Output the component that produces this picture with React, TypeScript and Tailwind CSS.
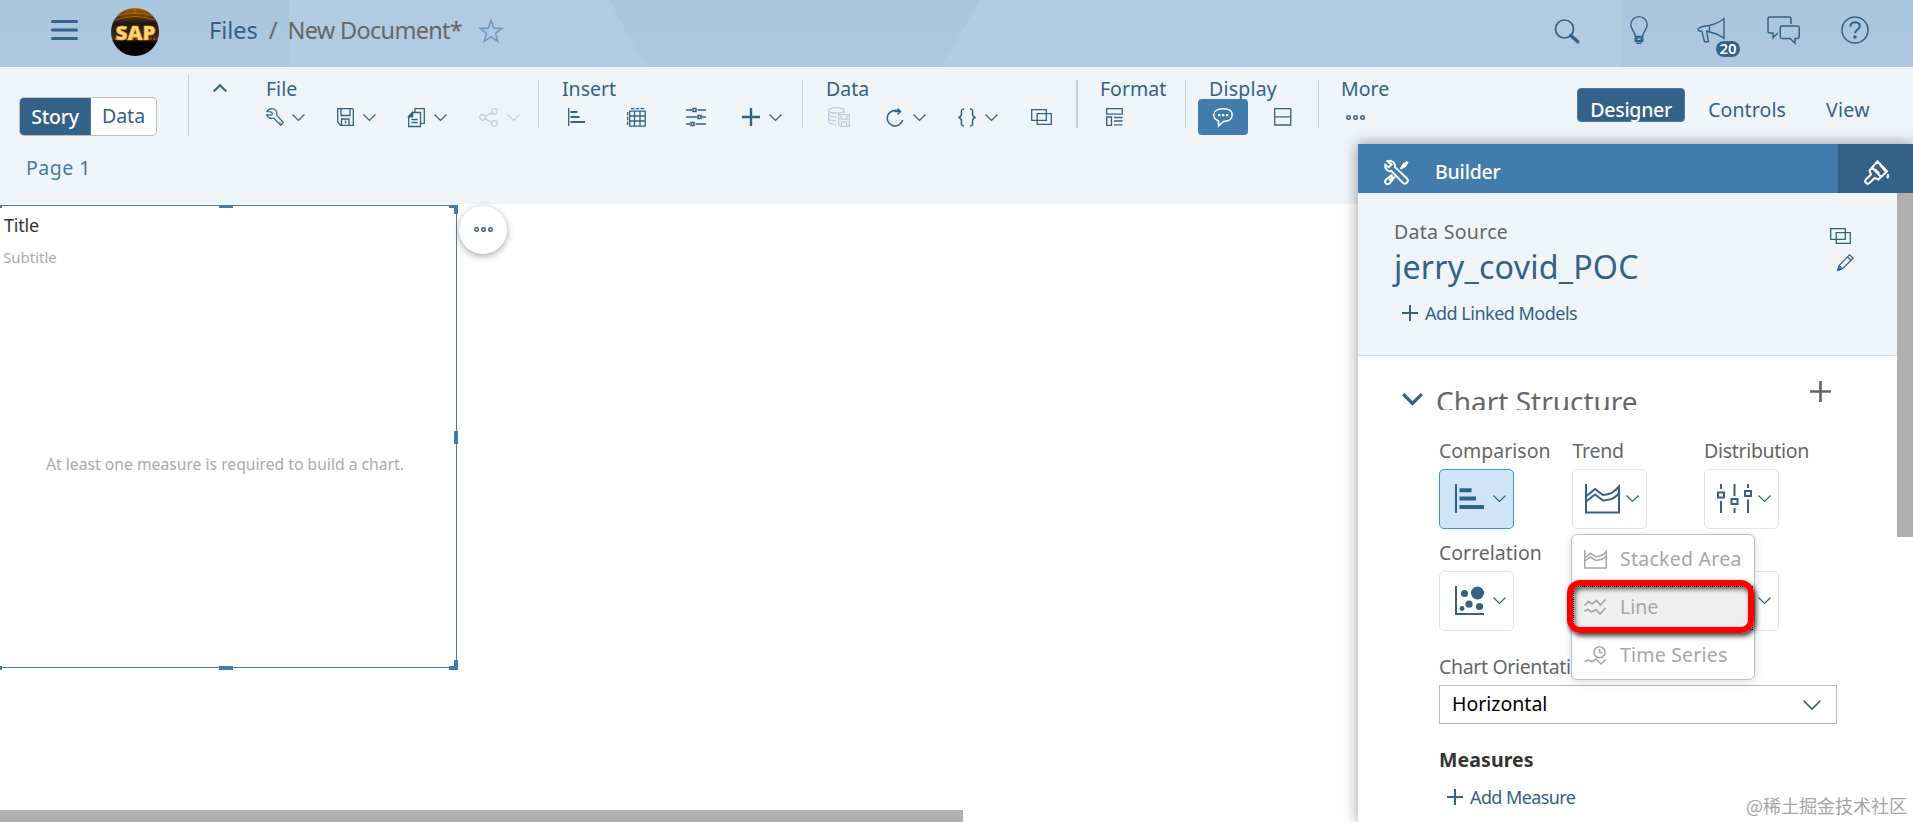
import type { ReactNode } from "react";

type IconProps = {
    w: number;
    h: number;
    sw?: number;
    className?: string;
    children: ReactNode;
};

function Icon({ w, h, sw = 1.3, className = "", children }: IconProps) {
    return (
        <svg
            width={w}
            height={h}
            viewBox={`0 0 ${w} ${h}`}
            fill="none"
            stroke="currentColor"
            strokeWidth={sw}
            className={`shrink-0 overflow-visible ${className}`}
        >
            {children}
        </svg>
    );
}

const Chevron = ({ className = "" }: { className?: string }) => (
    <Icon w={13} h={7} sw={1.2} className={className}>
        <path d="M.5.5l6 6 6-6" />
    </Icon>
);

const Dots = () => (
    <Icon w={19} h={5} sw={1.4}>
        <circle cx="2.5" cy="2.5" r="1.8" />
        <circle cx="9.5" cy="2.5" r="1.8" />
        <circle cx="16.5" cy="2.5" r="1.8" />
    </Icon>
);

const Overlap = () => (
    <Icon w={21} h={16}>
        <path d="M.7.7h14.6v10.6H.7zM6.2 4.7h14.1v10.6H6.2z" />
    </Icon>
);

const Plus = ({ s, sw }: { s: number; sw: number }) => (
    <svg width={s} height={s} viewBox="0 0 18 18" stroke="currentColor" strokeWidth={sw} className="shrink-0">
        <path d="M9 0v18M0 9h18" />
    </svg>
);

function Logo() {
    return (
        <svg width="48" height="48" viewBox="0 0 48 48" className="ml-[33px]">
            <defs>
                <linearGradient id="sky" x1="0" y1="0" x2="0" y2="1">
                    <stop offset="0" stopColor="#a85f08" />
                    <stop offset=".17" stopColor="#6b3a06" />
                    <stop offset=".32" stopColor="#1d1614" />
                    <stop offset=".62" stopColor="#4a2a0a" />
                    <stop offset=".72" stopColor="#0a0604" />
                    <stop offset="1" stopColor="#020101" />
                </linearGradient>
                <clipPath id="round">
                    <circle cx="24" cy="24" r="24" />
                </clipPath>
            </defs>
            <g clipPath="url(#round)">
                <rect width="48" height="48" fill="url(#sky)" />
                <path d="M24 0v6M6 8q18-6 36 0M4 12q20-7 40 0" stroke="#d98a1a" strokeWidth=".8" fill="none" opacity=".7" />
                <path d="M0 31h48" stroke="#b5701c" strokeWidth="2" strokeDasharray="2 1.5" opacity=".6" />
                <text
                    x="24.5"
                    y="31.5"
                    textAnchor="middle"
                    fontFamily="'Noto Sans', sans-serif"
                    fontSize="19.5"
                    fontWeight="900"
                    fill="#ffd873"
                    stroke="#e9a63a"
                    strokeWidth=".6"
                    textLength="40"
                    lengthAdjust="spacingAndGlyphs"
                >
                    SAP
                </text>
            </g>
        </svg>
    );
}

function Header() {
    return (
        <header className="relative h-[67px] shrink-0 bg-linear-to-b from-[#a9c6df] to-[#aec7e0] text-[#346187]">
            <svg className="absolute inset-0 h-full w-full" viewBox="0 0 1913 67" preserveAspectRatio="none">
                <path d="M289 0h321q18 40 38 67H289zM980 0h641v67H941z" fill="#b2cce2" opacity=".8" />
            </svg>
            <div className="relative flex h-full items-start">
                <Icon w={27} h={20} sw={3} className="mt-[20px] ml-[51px]">
                    <path d="M1.5 1.5h24M1.5 10h24M1.5 18.5h24" strokeLinecap="round" />
                </Icon>
                <div className="mt-2">
                    <Logo />
                </div>
                <div className="mt-[14px] ml-[50px] flex text-[23.5px] leading-[32px] whitespace-pre">
                    <span>Files</span>
                    <span className="ml-[11px] text-[#666]">/</span>
                    <span className="ml-[10px] tracking-[-0.7px] text-[#666]">New Document*</span>
                </div>
                <Icon w={24} h={24} sw={1.6} className="mt-[19px] ml-[17px] text-[#6f9bc2]">
                    <path d="M12 1.6l2.8 7.5 8 .3-6.3 5 2.2 7.9-6.7-4.5-6.7 4.5 2.2-7.9-6.3-5 8-.3z" />
                </Icon>

                <div className="mr-[44px] ml-auto flex">
                    <Icon w={24} h={24} sw={1.7} className="mt-[19px]">
                        <circle cx="9.5" cy="10" r="9" />
                        <path d="M15.8 16.5l7 6.3" strokeWidth="3.4" strokeLinecap="round" />
                    </Icon>
                    <Icon w={18} h={28} sw={1.4} className="mt-[16px] ml-[51px]">
                        <path d="M5.3 20.5c0-5-4.5-6.8-4.5-11.7a8.2 8.2 0 0 1 16.4 0c0 4.9-4.5 6.7-4.5 11.7z" />
                        <path d="M5.3 22h7.4v3.5H5.3z" fill="currentColor" />
                        <path d="M6.5 27.3h5" />
                        <path d="M7.5 23.3h3" stroke="#abc5de" />
                    </Icon>
                    <div className="relative mt-[18px] ml-[49px]">
                        <Icon w={28} h={25} sw={1.4}>
                            <path d="M27 .8v19.7c-4-3-9-5.5-14.5-6.5V7.5C18 6 23 4 27 .8zM12.5 7.5C7.5 8.5 2.5 8 .8 11.5c.8 1.8 2.3 2 4 1.7l2.7 10.5h4L9.5 12.5M12.5 14c-1.5-.3-2.5-.8-3-1.5" />
                        </Icon>
                        <span className="absolute top-[23px] left-[19px] flex h-4 w-6 items-center justify-center rounded-full bg-[#346187] pb-px text-[15px] leading-none font-semibold text-white">
                            20
                        </span>
                    </div>
                    <Icon w={33} h={28} sw={1.5} className="mt-[16px] ml-[42px]">
                        <path d="M24 8V3a2 2 0 0 0-2-2H3a2 2 0 0 0-2 2v12a2 2 0 0 0 2 2h3v4.5l5-4.5" />
                        <path d="M15 10h15.5a1.7 1.7 0 0 1 1.7 1.7v9a1.7 1.7 0 0 1-1.7 1.7H28v4.8l-5-4.8h-8a1.7 1.7 0 0 1-1.7-1.7v-9A1.7 1.7 0 0 1 15 10z" />
                    </Icon>
                    <Icon w={28} h={28} sw={1.5} className="mt-[16px] ml-[41px]">
                        <circle cx="14" cy="14" r="13" />
                        <path d="M9.3 10.8c0-6 9.6-6 9.6-.8 0 3.4-4.9 3.6-4.9 7.3" strokeWidth="2" />
                        <circle cx="14" cy="21" r="1" fill="currentColor" />
                    </Icon>
                </div>
            </div>
        </header>
    );
}

function Group({ label, className, children }: { label: string; className: string; children: ReactNode }) {
    return (
        <div className={`flex shrink-0 flex-col ${className}`}>
            <div className="mt-[10px] h-[22px] pl-px text-[19.5px] leading-[24px]">{label}</div>
            <div className="flex h-9 items-center">{children}</div>
        </div>
    );
}

const Sep = () => <div className="mt-[13px] h-12 w-px shrink-0 bg-[#c5cfd8]" />;

function Ribbon() {
    return (
        <div className="flex h-[77px] shrink-0 bg-[#eff4f9] text-[#346187]">
            <div className="mt-[30px] ml-[19px] flex h-[39px] w-[138px] shrink-0 overflow-hidden rounded-[5px] border border-[#bfbfbf] bg-white text-[19.5px] leading-[36px]">
                <div className="-my-px -ml-px w-[72px] border border-[#427cac] bg-[#346187] pt-px text-center font-medium tracking-[-0.2px] text-white">
                    Story
                </div>
                <div className="flex-1 text-center">Data</div>
            </div>
            <div className="mt-2 ml-[31px] h-[61px] w-px shrink-0 bg-[#c5cfd8]" />
            <Icon w={14} h={8} sw={2} className="mt-[17px] ml-[24px]">
                <path d="M.7 7.5L7 1.2l6.3 6.3" />
            </Icon>

            <Group label="File" className="ml-[38px] w-[273px]">
                <Icon w={18} h={18} sw={1.2} className="ml-px">
                    <path d="M1 3.5C3-.3 8.5-.2 10.3 3c.8 1.5.8 2.8.4 4.2l6.6 7.3-2.6 2.8L7.8 10C4.5 11.2 1.7 9.5.8 6.7l4.2.5c1.7 0 2-3-.3-3.4z" />
                    <path d="M13 14l2.5 2.5" opacity=".5" />
                </Icon>
                <Chevron className="ml-[8px]" />
                <Icon w={17} h={18} className="ml-[32px]">
                    <path d="M.7.7h14.3a1.3 1.3 0 0 1 1.3 1.3v15.3H3.7l-3-3z" />
                    <path d="M4 1v6.5h9V1M4.5 17v-6h7.5v6M8.5 12.5v3" />
                </Icon>
                <Chevron className="ml-[9px]" />
                <Icon w={17} h={19} className="ml-[32px]">
                    <path d="M4.5 4.5h8v14H.7V8.5zM4.5 4.5v4H.7M3.5 11.5h6M3.5 14.5h6" />
                    <path d="M7 4V.7h9.3v14.6h-3.5" />
                    <path d="M.7 8.5l3.8-4v4z" fill="currentColor" />
                </Icon>
                <Chevron className="ml-[9px]" />
                <Icon w={19} h={19} className="ml-[32px] text-[#bfcfdf]">
                    <circle cx="3.5" cy="9.5" r="2.8" />
                    <circle cx="15.5" cy="3.5" r="2.8" />
                    <circle cx="15.5" cy="15.5" r="2.8" />
                    <path d="M6 8.3l7-3.5M6 10.8l7 3.5" />
                </Icon>
                <Chevron className="ml-[9px] text-[#bfcfdf]" />
            </Group>
            <Sep />

            <Group label="Insert" className="ml-[22px] w-[241px]">
                <Icon w={18} h={18} className="ml-[7px]">
                    <path d="M.7 0v18" />
                    <path d="M2.5 4h7M2.5 9h9M2.5 14h14.5" strokeWidth="2.2" />
                </Icon>
                <Icon w={19} h={19} className="ml-[41px]">
                    <path d="M2.7 3.2h15.5v15H2.7zM7.5 3v15M13 3v15M3 8h15M3 13h15" />
                    <path d="M4 .7h14M.6 4v14" strokeDasharray="3.5 1.3" />
                </Icon>
                <Icon w={20} h={18} className="ml-[40px]" sw={1.5}>
                    <path d="M0 2h6M11.5 2H20M0 9h11M16 9h4M0 16h4M9.5 16H20" />
                    <path d="M7 .5h3v3H7zM12 7.5h3v3h-3zM5 14.5h3v3H5z" />
                </Icon>
                <div className="ml-[36px]">
                    <Plus s={18} sw={2.4} />
                </div>
                <Chevron className="ml-[9px]" />
            </Group>
            <Sep />

            <Group label="Data" className="ml-[22px] w-[251px]">
                <Icon w={22} h={20} className="ml-[3px] text-[#bfcfdf]">
                    <ellipse cx="8.5" cy="3.5" rx="7.8" ry="2.8" />
                    <path d="M.7 3.5v11c0 1.5 3 2.6 7.5 2.8M16.3 3.5V6M.7 7c0 1.8 3.5 3 7.8 3M.7 11c0 1.6 3 2.7 7.5 2.8" />
                    <path d="M10.7 7.7h10.6v11.6h-8.8l-1.8-1.8zM13 8v4h6V8M13.5 19v-4h5v4" />
                </Icon>
                <Icon w={18} h={19} sw={1.5} className="ml-[36px]">
                    <path d="M13 3.5A7.8 7.8 0 1 0 16.6 12M8.5 3.5h5.5M11.5.5l3 3-3 3" />
                </Icon>
                <Chevron className="ml-[9px]" />
                <Icon w={18} h={19} sw={1.5} className="ml-[32px]">
                    <path d="M6 1C2.5 1 3.5 4 3.5 6S2.5 9 .5 9.5c2 .5 3 1.5 3 3.5S2.5 18 6 18M12 1c3.5 0 2.5 3 2.5 5s1 3 3 3.5c-2 .5-3 1.5-3 3.5s1 5-2.5 5" />
                </Icon>
                <Chevron className="mr-[33px] ml-[9px]" />
                <Overlap />
            </Group>
            <div className="mt-[13px] h-12 w-0.5 shrink-0 bg-[#c5cfd8]" />

            <Group label="Format" className="ml-[21px] w-[86px]">
                <Icon w={17} h={18} className="ml-[7px]">
                    <path d="M.7.7h15.5v5.5H.7zM.7 9h4.8v8.3H.7zM8 9.5h8.5M8 13h8.5M8 16.8h8.5" />
                </Icon>
            </Group>
            <Sep />

            <Group label="Display" className="ml-[12px] w-[120px] [&>div:first-child]:pl-[11px] [&>div:first-child]:tracking-[0.2px]">
                <div className="flex h-9 w-[50px] shrink-0 items-center justify-center rounded-[4px] bg-[#427cac] text-white">
                    <Icon w={20} h={19} sw={1.5}>
                        <path d="M9.5.8h1c5.5 0 8.7 2.5 8.7 6.2s-3.2 6.4-8.7 6.4L5.5 18v-5.2C2.5 12 .8 9.8.8 7 .8 3.3 4 .8 9.5.8z" />
                        <path d="M5 7.2h2.3M9 7.2h2.3M13 7.2h2.3" strokeWidth="2.3" />
                    </Icon>
                </div>
                <Icon w={18} h={18} className="ml-[26px]">
                    <path d="M.7.7h16.1v16.3H.7zM.7 8.8h16" />
                </Icon>
            </Group>
            <Sep />

            <Group label="More" className="ml-[21px]">
                <div className="ml-[6px]">
                    <Dots />
                </div>
            </Group>

            <div className="mr-[41px] ml-auto flex text-[19.5px] leading-[24px]">
                <div className="mt-[21px] h-[34px] w-[108px] rounded-[4px] border border-[#427cac] bg-[#346187] pt-[9px] text-center font-medium tracking-[-0.3px] text-white">
                    Designer
                </div>
                <div className="mt-[31px] ml-[23px] tracking-[0.1px]">Controls</div>
                <div className="mt-[31px] ml-[40px] w-[46px] tracking-[0.3px]">View</div>
            </div>
        </div>
    );
}

function Canvas() {
    return (
        <div className="flex min-w-0 flex-1 flex-col bg-white">
            <div className="h-[60px] shrink-0 bg-[#eff4f9] pt-[11px] pl-[26px] text-[19.5px] leading-[26px] tracking-[0.5px] text-[#427cac]">
                Page 1
            </div>
            <div className="flex flex-1 items-start">
                <div className="relative mt-px h-[463px] w-[457px] border-y border-r border-[#427cac]">
                    <div className="mt-[7px] ml-[4px] text-[18px] leading-[24px] tracking-[-0.2px] text-[#333]">Title</div>
                    <div className="mt-[9px] ml-[3px] text-[15px] leading-[22px] text-[#a9abad]">Subtitle</div>
                    <div className="mt-[184px] pr-[6px] text-center text-[15.7px] leading-[24px] text-[#a9abad]">
                        At least one measure is required to build a chart.
                    </div>
                    {/* resize handles */}
                    <i className="absolute -top-px left-0 h-[3px] w-0.5 bg-[#427cac]" />
                    <i className="absolute -top-px left-[219px] h-[3px] w-[14px] bg-[#427cac]" />
                    <i className="absolute -top-px -right-0.5 h-[3px] w-[9px] bg-[#427cac]" />
                    <i className="absolute -top-px -right-0.5 h-[9px] w-1 bg-[#427cac]" />
                    <i className="absolute top-[225px] -right-0.5 h-[13px] w-1 bg-[#427cac]" />
                    <i className="absolute -bottom-[3px] left-0 h-1 w-0.5 bg-[#427cac]" />
                    <i className="absolute -bottom-[3px] left-[219px] h-1 w-[14px] bg-[#427cac]" />
                    <i className="absolute -right-0.5 -bottom-[3px] h-1 w-[9px] bg-[#427cac]" />
                    <i className="absolute -right-0.5 -bottom-[3px] h-[10px] w-1 bg-[#427cac]" />
                </div>
                <div className="mt-[2px] ml-[2px] flex size-12 items-center justify-center rounded-full bg-white pb-px text-[#346187] shadow-[0_2px_7px_rgba(0,0,0,0.35)]">
                    <Dots />
                </div>
            </div>
            <div className="h-3 w-[963px] shrink-0 bg-[#b0b0b0]" />
        </div>
    );
}

const AreaIcon = () => (
    <Icon w={35} h={30} sw={2}>
        <path d="M1 0v28.5h33V2.5c-5 6-9 8-16 8.5L10 5 1 12.5" />
        <path d="M1 17.5l9-7 8 6c7-.5 11-1.5 16-7" />
    </Icon>
);

const BarIcon = () => (
    <Icon w={29} h={30} sw={2}>
        <path d="M1 0v29" />
        <path d="M4.5 6.3h12M4.5 14.5h16.5M4.5 23h24.5" strokeWidth="4" />
    </Icon>
);

const BoxIcon = () => (
    <Icon w={36} h={30} sw={2}>
        <path d="M4 0v5M4 17v12M17.5 0v12M17.5 24v5M31 0v4M31 15.5V29" />
        <path d="M1 8.5h6v5H1zM14.5 15h6v5h-6zM28 7h6v5h-6z" />
    </Icon>
);

const BubbleIcon = () => (
    <Icon w={29} h={30} sw={2}>
        <path d="M1 0v28h28" />
        <g fill="currentColor" stroke="none">
            <circle cx="9.5" cy="7.5" r="3.6" />
            <circle cx="22.5" cy="7" r="6.5" />
            <circle cx="14" cy="18.2" r="3.6" />
            <circle cx="24.5" cy="20.5" r="3.6" />
            <circle cx="7" cy="22.5" r="2.4" />
        </g>
    </Icon>
);

type ChartTypeProps = {
    label?: string;
    labelClass?: string;
    active?: boolean;
    pad: string;
    icon?: ReactNode;
};

function ChartType({ label, labelClass = "", active, pad, icon }: ChartTypeProps) {
    return (
        <div>
            <div className={`h-[26px] text-[19.5px] leading-[26px] whitespace-nowrap text-[#666] ${labelClass}`}>
                {label}
            </div>
            <div
                className={[
                    "mt-[5px] flex h-[60px] w-[75px] items-center justify-between rounded-[5px] border pr-[7px] text-[#346187]",
                    pad,
                    active ? "border-[#3f93d6] bg-[#d0e4f8]" : "border-[#e5e5e5] bg-white",
                ].join(" ")}
            >
                {icon ?? <span />}
                <Chevron className="-mt-px" />
            </div>
        </div>
    );
}

function TrendMenu() {
    return (
        <div className="absolute top-[178px] left-[213px] z-10 w-[184px] rounded-[6px] border border-[#bfbfbf] bg-white text-[19.5px] leading-[26px] text-[#a5a7a9] shadow-[0_2px_10px_rgba(0,0,0,0.15)]">
            <div className="flex h-[48px] items-center pl-[12px]">
                <Icon w={23} h={19} sw={1.5}>
                    <path d="M.8 0v18h21.5V1.5c-3 4-6 5-10.5 5.3L6.5 3.5.8 8M.8 11l5.7-4 5.3 3.5c4.5-.2 7.5-1 10.5-4.5" />
                </Icon>
                <span className="ml-[13px] tracking-[0.25px] whitespace-nowrap">Stacked Area</span>
            </div>
            <div className="relative mx-px flex h-[48px] items-center pl-[11px]">
                <span className="absolute inset-x-0 top-[3px] h-[44px] border border-dotted border-black bg-[#efefef]" />
                <Icon w={22} h={16} sw={1.7} className="relative">
                    <path d="M.5 6.5l4-4 3.5 2.5 4.5-3.5 4 4.5L21.5.5M.5 12l3.5-1.5 3.5 2.5 4.5-2.5 4 4.5 5.5-6" />
                </Icon>
                <span className="relative ml-[14px]">Line</span>
                <span className="absolute -top-[3px] -left-[6px] h-[53px] w-[187px] rounded-[13px] border-[6px] border-[#fe0000] shadow-[2px_3px_5px_rgba(0,0,0,0.75),inset_2px_3px_5px_rgba(0,0,0,0.65)]" />
            </div>
            <div className="flex h-[48px] items-center pl-[12px]">
                <Icon w={22} h={19} sw={1.6}>
                    <circle cx="15.5" cy="6.2" r="5.5" />
                    <path d="M15.5 3v3.5h3M.5 15.5l4-1.5 3.5 1.8 4-2.8 5 5 5-4.5" />
                </Icon>
                <span className="ml-[14px] tracking-[0.2px]">Time Series</span>
            </div>
        </div>
    );
}

function Builder() {
    return (
        <aside className="relative z-10 flex h-full w-[555px] shrink-0 flex-col bg-white shadow-[0_0_14px_rgba(0,0,0,0.4)]">
            <div className="flex h-[49px] shrink-0 bg-[#427cac] text-white">
                <Icon w={25} h={25} sw={2} className="mt-[16px] ml-[26px]">
                    <path d="M3.5 1.2C7-.2 11.5 2 11 7.2L23 18.5c2.5 2.8-1.3 6.8-4.2 4.3L7.5 11C3.5 11.8.5 8.5 1.3 4.8l3.4 2.5 2.8-2.8z" />
                    <path d="M16.5 8.5l2.5-4.5 4-2.5 1 1-2.5 4-4.5 2.5z" fill="currentColor" strokeWidth="1" />
                    <path d="M8.5 14.5l-6.5 5c-2.5 3 1 6 3.5 4l5.5-7M5 20.5l4-4" />
                </Icon>
                <div className="mt-[15px] ml-[26px] text-[19.5px] leading-[26px] font-medium tracking-[-0.2px]">Builder</div>
                <div className="ml-auto w-[75px] bg-[#346187] pt-[16px] pl-[26px]">
                    <Icon w={26} h={26} sw={2}>
                        <path d="M13.5 1.5L8 7.5l9 9.5 6-5.5zM8 7.5L5.5 10.5l1.5 4L1.8 19.5c-2 2.8 1.4 5.3 3.7 3.5l5-5 4 1.5 2.5-2.5" />
                        <path d="M14 2l6.5 8.5 2.5 1z" fill="currentColor" />
                        <path d="M11 9l4.5 4.5" strokeWidth="1.6" />
                        <path d="M24 14c1 2 1.2 4-.2 4.2S22.8 16 24 14z" fill="currentColor" strokeWidth="1" />
                    </Icon>
                </div>
            </div>

            <div className="flex flex-1 items-start">
                <div className="h-full w-[539px]">
                    <div className="flex h-[163px] border-b border-[#cfdfec] bg-[#eff4f9] pl-[36px] text-[#346187]">
                        <div className="pt-[26px]">
                            <div className="text-[19.5px] leading-[26px] tracking-[0.3px] text-[#666]">Data Source</div>
                            <div className="mt-px pt-px text-[32.2px] leading-[40px] tracking-[0.2px]">jerry_covid_POC</div>
                            <div className="mt-[14px] flex items-center pl-[8px] text-[18px] leading-[24px] tracking-[-0.5px]">
                                <Plus s={16} sw={2.2} />
                                <span className="ml-[7px]">Add Linked Models</span>
                            </div>
                        </div>
                        <div className="mr-[43px] ml-auto flex flex-col items-end pt-[35px]">
                            <div className="mr-[3px]">
                                <Overlap />
                            </div>
                            <Icon w={17} h={17} sw={1.2} className="mt-[10px]">
                                <path d="M.7 16.3l1.5-5L12.5.8l3.7 3.5L5.5 14.8zM10.5 3l3.5 3.5M2.2 11.3l3.3 3.5" />
                                <path d="M.7 16.3l1-3 2 2z" fill="currentColor" />
                            </Icon>
                        </div>
                    </div>

                    <div className="relative">
                        <div className="flex h-[82px] text-[#666]">
                            <Icon w={21} h={13} sw={3.2} className="mt-[37px] ml-[44px] text-[#346187]">
                                <path d="M1.2 1.2l9.3 9.3 9.3-9.3" />
                            </Icon>
                            <div className="mt-[28px] ml-[13px] h-[26px] overflow-hidden pt-px text-[28px] leading-[32px] whitespace-nowrap">
                                Chart Structure
                            </div>
                            <div className="mt-[25px] mr-[66px] ml-auto">
                                <Plus s={21} sw={2.3} />
                            </div>
                        </div>
                        <div className="grid grid-cols-[132.5px_132.5px_75px] gap-y-[11px] pl-[81px]">
                            <ChartType label="Comparison" active pad="pl-[15px]" icon={<BarIcon />} />
                            <ChartType label="Trend" labelClass="pl-px tracking-[-0.3px]" pad="pl-[12px]" icon={<AreaIcon />} />
                            <ChartType label="Distribution" labelClass="tracking-[-0.3px]" pad="pl-[12px]" icon={<BoxIcon />} />
                            <ChartType label="Correlation" pad="pl-[15px]" icon={<BubbleIcon />} />
                            <ChartType pad="pl-[15px]" />
                            <ChartType pad="pl-[12px]" />
                        </div>
                        <TrendMenu />

                        <div className="pl-[81px]">
                            <div className="mt-[23px] text-[19.5px] leading-[26px] tracking-[-0.35px] text-[#666]">Chart Orientation</div>
                            <div className="mt-[5px] flex h-[39px] w-[398px] items-center justify-between border border-[#b8babc] pr-[15px] pl-[12px] text-[19.5px] leading-none text-black">
                                <span className="pb-px">Horizontal</span>
                                <Icon w={18} h={10} sw={1.6} className="mt-px text-[#346187]">
                                    <path d="M.6.6L9 9 17.4.6" />
                                </Icon>
                            </div>
                            <div className="mt-[23px] text-[19.5px] leading-[26px] font-bold tracking-[0.1px] text-[#333]">
                                Measures
                            </div>
                            <div className="mt-[12px] flex items-center pl-[8px] text-[18px] leading-[24px] tracking-[-0.6px] text-[#346187]">
                                <Plus s={16} sw={2.2} />
                                <span className="ml-[7px]">Add Measure</span>
                            </div>
                        </div>
                    </div>
                </div>
                <div className="h-[344px] w-4 bg-[#b0b0b0]" />
            </div>

            <div className="absolute right-[6px] bottom-[4px] font-['Noto_Sans_CJK_SC',sans-serif] text-[18px] leading-[26px] text-[#a5a5a5]">
                @稀土掘金技术社区
            </div>
        </aside>
    );
}

export default function App() {
    return (
        <div className="flex h-[822px] w-full flex-col overflow-hidden bg-white font-['Noto_Sans',sans-serif]">
            <Header />
            <Ribbon />
            <div className="flex min-h-0 flex-1">
                <Canvas />
                <Builder />
            </div>
        </div>
    );
}
